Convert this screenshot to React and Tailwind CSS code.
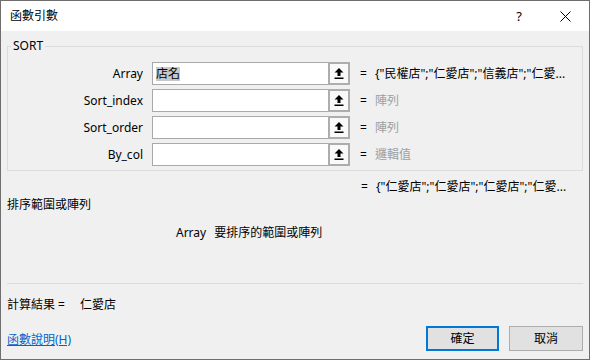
import React from 'react';

const font = { fontFamily: '"Segoe UI", "Noto Sans", "Noto Sans CJK TC", sans-serif' };

function ArgRow({ label, value, muted, selected }) {
  return (
    <div className="flex items-center h-[23px]">
      <div className="w-[135px] text-right pr-0">{label}</div>
      <div className="ml-[9px] flex h-[23px] w-[198px] border border-[#a9a9a9] bg-white">
        <div className="flex-1 flex items-center pl-[3px]">
          {selected && <span className="bg-[#c8c8c8] leading-[14px]">{selected}</span>}
        </div>
        <div className="w-[22px] h-[23px] -my-px -mr-px border-2 border-[#adadad] bg-[#f9f9f9] flex items-center justify-center">
          <svg width="10" height="11" viewBox="0 0 10 11">
            <path d="M5 0 L9.5 4.5 L6.5 4.5 L6.5 8 L3.5 8 L3.5 4.5 L0.5 4.5 Z" fill="#000" />
            <rect x="0.5" y="9.5" width="9" height="1.5" fill="#000" />
          </svg>
        </div>
      </div>
      <div className="ml-[10px] w-[15px]">=</div>
      <div className={muted ? 'text-[#a0a0a0]' : 'text-black'}>{value}</div>
    </div>
  );
}

export default function App() {
  const args = [
    { label: 'Array', value: '{"民權店";"仁愛店";"信義店";"仁愛...', selected: '店名' },
    { label: 'Sort_index', value: '陣列', muted: true },
    { label: 'Sort_order', value: '陣列', muted: true },
    { label: 'By_col', value: '邏輯值', muted: true },
  ];

  return (
    <div className="w-[591px] h-[361px] bg-white text-[12px] leading-[16px] text-black" style={font}>
      <div className="w-[590px] h-[360px] border border-[#6e6e6e] flex flex-col">
        {/* Title bar */}
        <div className="h-[30px] bg-white flex items-center pl-[9px]">
          <span>函數引數</span>
          <span className="ml-auto text-[13px] w-[12px] text-center">?</span>
          <svg className="ml-[35px] mr-[18px]" width="11" height="11" viewBox="0 0 11 11">
            <path d="M0.5 0.5 L10.5 10.5 M10.5 0.5 L0.5 10.5" stroke="#000" strokeWidth="1" />
          </svg>
        </div>

        {/* Body */}
        <div className="flex-1 bg-[#f0f0f0] px-[6px] flex flex-col">
          <div className="relative mt-[15px] border border-[#dcdcdc] pt-[15px] pb-[4px] flex flex-col gap-[4px]">
            <span className="absolute -top-[9px] left-[3px] bg-[#f0f0f0] px-[2px]">SORT</span>
            {args.map((a, i) => (
              <ArgRow key={i} {...a} />
            ))}
          </div>

          <div className="flex mt-[8px] pl-[354px]">
            <div className="w-[15px]">=</div>
            <div>{'{"仁愛店";"仁愛店";"仁愛店";"仁愛...'}</div>
          </div>

          <div className="mt-[2px]">排序範圍或陣列</div>

          <div className="mt-[12px] pl-[169px] flex">
            <span>Array</span>
            <span className="ml-[8px]">要排序的範圍或陣列</span>
          </div>

          <div className="mt-[42px] h-px bg-[#dcdcdc]" />

          <div className="mt-[13px] flex">
            <span>計算結果 =</span>
            <span className="ml-[15px]">仁愛店</span>
          </div>

          <div className="mt-[13px] flex items-center">
            <a href="#" className="text-[#0066cc] underline mt-[2px]">函數說明(H)</a>
            <button className="ml-auto w-[73px] h-[25px] border-2 border-[#0078d7] bg-[#e1e1e1]">確定</button>
            <button className="ml-[10px] w-[74px] h-[25px] border border-[#adadad] bg-[#e1e1e1]">取消</button>
          </div>
        </div>
      </div>
    </div>
  );
}
